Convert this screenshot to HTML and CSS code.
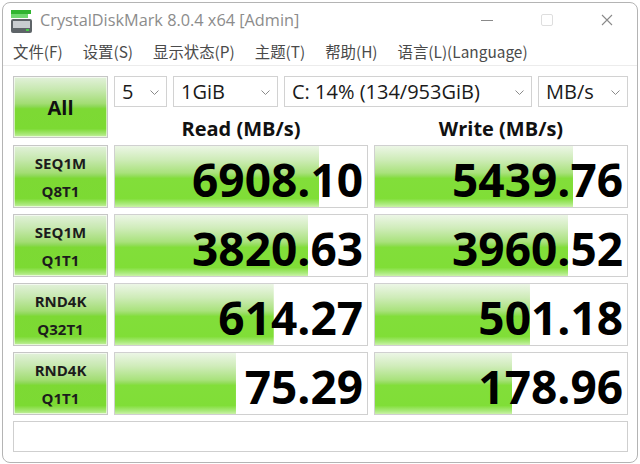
FILE: index.html
```html
<!DOCTYPE html>
<html lang="zh-CN">
<head>
    <meta charset="UTF-8">
    <title>CrystalDiskMark 8.0.4 x64 [Admin]</title>
    <link rel="stylesheet" href="styles.css">
</head>
<body>
    <div class="window">
        <div class="titlebar">
            <svg class="app-icon" width="22" height="24" viewBox="0 0 22 24">
                <rect x="1" y="0" width="20" height="4" fill="#2fb52f"/>
                <rect x="1" y="4" width="17" height="4" fill="#6fd86f"/>
                <rect x="1" y="9" width="21" height="14" rx="2" fill="#5e6468"/>
                <rect x="3" y="11" width="17" height="7" fill="#c9cdd0"/>
                <rect x="16" y="19" width="3" height="2" fill="#46d046"/>
            </svg>
            <span class="title">CrystalDiskMark 8.0.4 x64 [Admin]</span>
            <div class="caption">
                <span class="cap-btn">
                    <svg width="12" height="12" viewBox="0 0 12 12"><line x1="0" y1="6.5" x2="12" y2="6.5" stroke="#8a8a8a" stroke-width="1"/></svg>
                </span>
                <span class="cap-btn">
                    <svg width="12" height="12" viewBox="0 0 12 12"><rect x="0.5" y="0.5" width="11" height="11" rx="1.5" fill="none" stroke="#dedede" stroke-width="1"/></svg>
                </span>
                <span class="cap-btn">
                    <svg width="12" height="12" viewBox="0 0 12 12"><path d="M1 1 L11 11 M11 1 L1 11" stroke="#8a8a8a" stroke-width="1.1"/></svg>
                </span>
            </div>
        </div>

        <div class="menubar">
            <span>文件(F)</span>
            <span>设置(S)</span>
            <span>显示状态(P)</span>
            <span>主题(T)</span>
            <span>帮助(H)</span>
            <span>语言(L)(Language)</span>
        </div>

        <div class="main">
            <div class="board">
                <div class="all-btn">All</div>

                <div class="selects">
                    <div class="select w-count">5<svg class="chev" width="9" height="5" viewBox="0 0 9 5"><polyline points="0.5,0.5 4.5,4.5 8.5,0.5" fill="none" stroke="#8a8a8a"/></svg></div>
                    <div class="select w-size">1GiB<svg class="chev" width="9" height="5" viewBox="0 0 9 5"><polyline points="0.5,0.5 4.5,4.5 8.5,0.5" fill="none" stroke="#8a8a8a"/></svg></div>
                    <div class="select w-drive">C: 14% (134/953GiB)<svg class="chev" width="9" height="5" viewBox="0 0 9 5"><polyline points="0.5,0.5 4.5,4.5 8.5,0.5" fill="none" stroke="#8a8a8a"/></svg></div>
                    <div class="select w-unit">MB/s<svg class="chev" width="9" height="5" viewBox="0 0 9 5"><polyline points="0.5,0.5 4.5,4.5 8.5,0.5" fill="none" stroke="#8a8a8a"/></svg></div>
                </div>

                <div class="head">Read (MB/s)</div>
                <div class="head">Write (MB/s)</div>

                <div class="label"><span>SEQ1M</span><span>Q8T1</span></div>
                <div class="result" style="background-size: 81% 100%;">6908.10</div>
                <div class="result" style="background-size: 78.6% 100%;">5439.76</div>

                <div class="label"><span>SEQ1M</span><span>Q1T1</span></div>
                <div class="result" style="background-size: 76.6% 100%;">3820.63</div>
                <div class="result" style="background-size: 76.6% 100%;">3960.52</div>

                <div class="label"><span>RND4K</span><span>Q32T1</span></div>
                <div class="result" style="background-size: 63% 100%;">614.27</div>
                <div class="result" style="background-size: 61.5% 100%;">501.18</div>

                <div class="label"><span>RND4K</span><span>Q1T1</span></div>
                <div class="result" style="background-size: 48% 100%;">75.29</div>
                <div class="result" style="background-size: 54.4% 100%;">178.96</div>

                <div class="status"></div>
            </div>
        </div>
    </div>
</body>
</html>
```

FILE: styles.css
```css
* {
    box-sizing: border-box;
}

body {
    margin: 0;
    padding: 0;
    background-color: #fff;
    font-family: "Open Sans", "Noto Sans CJK SC", sans-serif;
}

.window {
    margin: 2px 2px 0 2px;
    height: 461px;
    border: 1px solid #b4b4b4;
    border-radius: 8px;
    background-color: #fff;
    overflow: hidden;
}

/* title bar */
.titlebar {
    display: flex;
    align-items: center;
    height: 33px;
}

.app-icon {
    margin-left: 7px;
    margin-top: 5px;
}

.title {
    margin-left: 8px;
    margin-top: 1px;
    font-size: 16.3px;
    color: #8c8c8c;
}

.caption {
    display: flex;
    margin-left: auto;
    height: 100%;
}

.cap-btn {
    width: 60px;
    display: flex;
    align-items: center;
    justify-content: center;
}

/* menu */
.menubar {
    display: flex;
    gap: 20px;
    height: 30px;
    padding: 2px 0 0 10px;
    border-bottom: 1px solid #ececec;
    font-family: "Noto Sans CJK SC", sans-serif;
    font-size: 15.4px;
    line-height: 26px;
    color: #4a4a4a;
}

/* main board */
.main {
    padding: 10px 0 0 10px;
}

.board {
    display: grid;
    grid-template-columns: 95px 254px 254px;
    grid-template-rows: 31px 26px repeat(4, 63px) 31px;
    gap: 6px;
}

.all-btn,
.label {
    border: 1px solid #c6c6c6;
    box-shadow: inset 0 0 0 1px rgba(255, 255, 255, 0.6);
    background: linear-gradient(to bottom, #e2f1da 0%, #c6e8ae 22%, #a3dd74 44%, #8ed858 49%, #7dd934 53%, #7cda33 86%, #a6e774 95%, #c6f0a2 100%);
    color: #111;
    font-weight: 700;
}

.all-btn {
    grid-row: 1 / 3;
    align-self: start;
    height: 62px;
    display: flex;
    align-items: center;
    justify-content: center;
    font-size: 20px;
}

.selects {
    grid-column: 2 / 4;
    display: flex;
    gap: 6px;
}

.select {
    display: flex;
    align-items: center;
    padding-left: 7px;
    border: 1px solid #d2d2d2;
    font-size: 20px;
    line-height: 29px;
    color: #1a1a1a;
}

.chev {
    margin-left: auto;
    margin-right: 7px;
    margin-top: 1px;
}

.w-count { width: 53px; }
.w-size { width: 105px; }
.w-drive { width: 248px; }
.w-unit { width: 90px; }

.head {
    text-align: center;
    font-size: 20px;
    font-weight: 700;
    line-height: 32px;
    color: #111;
}

.label {
    display: flex;
    flex-direction: column;
    align-items: center;
    justify-content: center;
    font-size: 15px;
    line-height: 28px;
    color: #1c1c1c;
}

.result {
    border: 1px solid #d0d0d0;
    background-color: #fff;
    background-image: linear-gradient(to bottom, #ecf6e6 0%, #cfecb9 22%, #a9e27c 44%, #94dd5c 49%, #82de3a 53%, #80de37 86%, #aaea7c 95%, #cbf2a8 100%);
    background-repeat: no-repeat;
    padding: 5px 4px 0 0;
    text-align: right;
    font-size: 46px;
    font-weight: 700;
    line-height: 56px;
    color: #000;
}

.status {
    grid-column: 1 / 4;
    border: 1px solid #cfcfcf;
    background-color: #fff;
}
```
